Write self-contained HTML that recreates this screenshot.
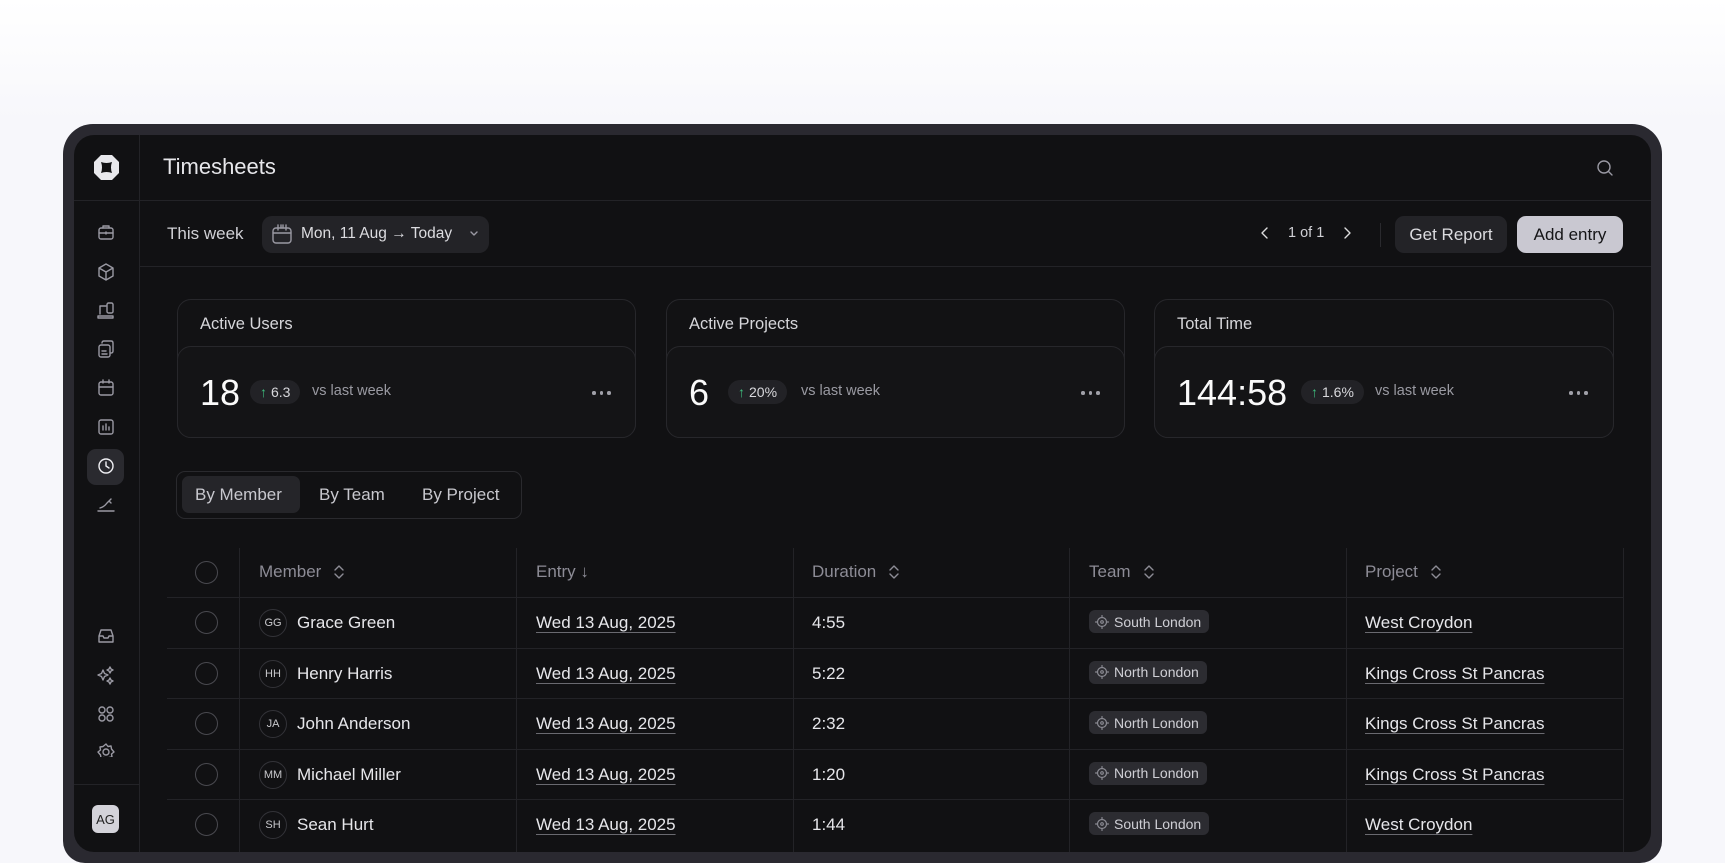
<!DOCTYPE html>
<html><head><meta charset="utf-8"><style>
*{box-sizing:border-box;margin:0;padding:0}
body{width:1725px;height:863px;overflow:hidden;background:linear-gradient(#ffffff 0px,#f7f7fb 120px,#f7f7fb 863px);font-family:"Liberation Sans",sans-serif;position:relative}
.a{position:absolute}
.frame{left:63px;top:124px;width:1599px;height:739px;background:#2a2930;border-radius:30px 30px 22px 22px}
.inner{left:74px;top:135px;width:1577px;height:717px;background:#111113;border-radius:20px;overflow:hidden}
.t{color:#e6e6ea;white-space:nowrap}
.hl{background:#232327;height:1px}
.vl{background:#232327;width:1px}
svg{display:block}
.ic{stroke:#9a99a3;fill:none;stroke-width:1.4;stroke-linecap:round;stroke-linejoin:round}
.card{border:1px solid #27272b;border-radius:14px;background:#121214}
.card .in{position:absolute;left:-1px;right:-1px;bottom:-1px;height:92px;border:1px solid #27272b;border-radius:14px;background:#141416}
.badge{background:#222226;border-radius:12px;height:24px;font-size:14px;color:#d8d8dc;padding:0 10px;display:flex;align-items:center;gap:4px}
.row .t{font-size:17px}
.pill{background:#2c2c31;border-radius:6px;height:23px;font-size:14px;color:#cfcfd5;display:flex;align-items:center;padding:0 8px 0 6px;gap:5px}
.u{text-decoration:underline;text-decoration-color:#6a6a70;text-underline-offset:4px}
.cb{width:23px;height:23px;border:1.5px solid #4a4a50;border-radius:50%}
.av{width:28px;height:28px;border:1px solid #333338;border-radius:50%;font-size:11px;color:#c8c8cc;display:flex;align-items:center;justify-content:center}
.th{color:#8d8c96;font-size:17px;display:flex;align-items:center;gap:12px}
.dots{display:flex;gap:4px}.dots i{width:3.5px;height:3.5px;border-radius:50%;background:#a0a0a8}
</style></head><body>
<div class="a frame"></div>
<div class="a inner">
 <div class="a vl" style="left:65px;top:0;height:717px"></div>
 <div class="a hl" style="left:0;top:65px;width:1577px"></div>
 <div class="a hl" style="left:65px;top:131px;width:1512px"></div>
 <div class="a hl" style="left:0;top:649px;width:65px"></div>
 <svg class="a" style="left:19px;top:19px" width="27" height="27" viewBox="0 0 27 27"><path d="M8 1h11l7 7v11l-7 7H8l-7-7V8z" fill="#e8e8ec"/><path d="M8 8q5.5 2 11 0q-2 5.5 0 11q-5.5-2-11 0q2-5.5 0-11z" fill="#111113"/></svg>
 <div class="a" style="left:13px;top:314px;width:37px;height:36px;background:#2a2a2f;border-radius:9px"></div>
 <svg class="a" style="left:23px;top:88px" width="18" height="420" viewBox="0 0 18 420">
  <g class="ic">
   <rect x="2" y="5" width="14" height="11" rx="2"/><path d="M6 5V3h6v2M2 10h14M9 9v2"/>
   <g transform="translate(0,40)"><path d="M9 1l7 4v8l-7 4-7-4V5z M2 5l7 4 7-4 M9 9v8"/></g>
   <g transform="translate(0,78)"><path d="M3 13V5h6M1 15h15v2H1z"/><rect x="10" y="2" width="6" height="10" rx="1.5"/></g>
   <g transform="translate(0,117)"><rect x="2" y="5" width="11" height="12" rx="2"/><path d="M5 3q0-2 2-2h7q2 0 2 2v8q0 2-2 2M5 11h4M5 14h5"/></g>
   <g transform="translate(0,156)"><rect x="2" y="3" width="14" height="13" rx="2"/><path d="M2 8h14M6 1v3M12 1v3"/></g>
   <g transform="translate(0,195)"><rect x="2" y="2" width="14" height="14" rx="2"/><path d="M6 12V8M9 12V6M12 12V9"/></g>
   <g transform="translate(0,234)" style="stroke:#f0f0f4"><circle cx="9" cy="9" r="7"/><path d="M9 5v4l3 2"/></g>
   <g transform="translate(0,273)"><path d="M1 15h16M3 12q4-1 7-5l4-4 M12 5l2 2"/></g>
  </g>
 </svg>
 <svg class="a" style="left:23px;top:492px" width="18" height="130" viewBox="0 0 18 130"><g class="ic">
  <path d="M2 9l2-6h10l2 6v6H2z M2 9h4l1 2h4l1-2h4"/>
  <g transform="translate(0,39)"><path d="M6 4l1.5 3.5L11 9l-3.5 1.5L6 14l-1.5-3.5L1 9l3.5-1.5z M13 1l1 2 2 1-2 1-1 2-1-2-2-1 2-1z M13 12l1 2 2 1-2 1-1 2-1-2-2-1 2-1z"/></g>
  <g transform="translate(0,78)"><circle cx="5" cy="5" r="3"/><circle cx="13" cy="5" r="3"/><circle cx="5" cy="13" r="3"/><circle cx="13" cy="13" r="3"/></g>
  <g transform="translate(0,116)"><circle cx="9" cy="9" r="3"/><path d="M9 1l2 2.5 3-.5.5 3L17 9l-2.5 2 .5 3-3 .5L9 17l-2-2.5-3 .5-.5-3L1 9l2.5-2-.5-3 3-.5z"/></g>
 </g></svg>
 <div class="a" style="left:18px;top:670px;width:27px;height:28px;background:#d4d3da;border-radius:6px;color:#222;font-size:13px;display:flex;align-items:center;justify-content:center">AG</div>
 <div class="a t" style="left:89px;top:19px;font-size:22px">Timesheets</div>
 <svg class="a" style="left:1522px;top:24px" width="18" height="18" viewBox="0 0 18 18"><g class="ic"><circle cx="8" cy="8" r="6"/><path d="M12.5 12.5L16 16"/></g></svg>
 <div class="a t" style="left:93px;top:89px;font-size:17px;color:#d0d0d5">This week</div>
 <div class="a" style="left:188px;top:81px;width:227px;height:37px;background:#232327;border-radius:10px"></div>
 <svg class="a" style="left:197px;top:89px" width="22" height="21" viewBox="0 0 22 21"><g class="ic"><rect x="2" y="4" width="18" height="15" rx="3"/><path d="M2 9h18M7 1v5M15 1v5M10 1v3M12 1v3"/></g></svg>
 <div class="a t" style="left:227px;top:90px;font-size:15.5px;color:#dcdce0">Mon, 11 Aug → Today</div>
 <svg class="a" style="left:395px;top:95px" width="10" height="8" viewBox="0 0 10 8"><path d="M2 2l3 3 3-3" class="ic"/></svg>
 <svg class="a" style="left:1186px;top:91px" width="10" height="14" viewBox="0 0 10 14"><path d="M7 2L2 7l5 5" class="ic" style="stroke:#ddd"/></svg>
 <div class="a t" style="left:1214px;top:90px;font-size:14.5px;color:#d0d0d5">1 of 1</div>
 <svg class="a" style="left:1268px;top:91px" width="10" height="14" viewBox="0 0 10 14"><path d="M3 2l5 5-5 5" class="ic" style="stroke:#ddd"/></svg>
 <div class="a vl" style="left:1306px;top:88px;height:24px;background:#2a2a2e"></div>
 <div class="a t" style="left:1321px;top:81px;width:112px;height:37px;background:#232327;border-radius:9px;font-size:17px;display:flex;align-items:center;justify-content:center;color:#dcdce0">Get Report</div>
 <div class="a t" style="left:1443px;top:81px;width:106px;height:37px;background:#c9c8d1;border-radius:9px;font-size:17px;display:flex;align-items:center;justify-content:center;color:#151517">Add entry</div>
 <div class="a card" style="left:103px;top:164px;width:459px;height:139px"><div class="a t" style="left:22px;top:15px;font-size:16.5px;color:#d6d6da">Active Users</div><div class="in">
  <div class="a t" style="left:22px;top:25px;font-size:36px;color:#fafafa">18</div>
  <div class="a badge" style="left:72px;top:33px"><span style="color:#3fbf7f">↑</span>6.3</div>
  <div class="a t" style="left:134px;top:36px;font-size:14.5px;color:#9a9aa2">vs last week</div>
  <div class="a dots" style="left:414px;top:44px"><i></i><i></i><i></i></div></div></div>
 <div class="a card" style="left:592px;top:164px;width:459px;height:139px"><div class="a t" style="left:22px;top:15px;font-size:16.5px;color:#d6d6da">Active Projects</div><div class="in">
  <div class="a t" style="left:22px;top:25px;font-size:36px;color:#fafafa">6</div>
  <div class="a badge" style="left:61px;top:33px"><span style="color:#3fbf7f">↑</span>20%</div>
  <div class="a t" style="left:134px;top:36px;font-size:14.5px;color:#9a9aa2">vs last week</div>
  <div class="a dots" style="left:414px;top:44px"><i></i><i></i><i></i></div></div></div>
 <div class="a card" style="left:1080px;top:164px;width:460px;height:139px"><div class="a t" style="left:22px;top:15px;font-size:16.5px;color:#d6d6da">Total Time</div><div class="in">
  <div class="a t" style="left:22px;top:25px;font-size:36px;color:#fafafa">144:58</div>
  <div class="a badge" style="left:146px;top:33px"><span style="color:#3fbf7f">↑</span>1.6%</div>
  <div class="a t" style="left:220px;top:36px;font-size:14.5px;color:#9a9aa2">vs last week</div>
  <div class="a dots" style="left:414px;top:44px"><i></i><i></i><i></i></div></div></div>
 <div class="a" style="left:102px;top:336px;width:346px;height:48px;border:1px solid #2a2a2e;border-radius:9px"></div>
 <div class="a" style="left:108px;top:341px;width:118px;height:37px;background:#252529;border-radius:7px"></div>
 <div class="a t" style="left:121px;top:350px;font-size:17px;color:#c8c8ce">By Member</div>
 <div class="a t" style="left:245px;top:350px;font-size:17px;color:#c8c8ce">By Team</div>
 <div class="a t" style="left:348px;top:350px;font-size:17px;color:#c8c8ce">By Project</div>
 <div class="a vl" style="left:165px;top:413px;height:310px"></div>
 <div class="a vl" style="left:442px;top:413px;height:310px"></div>
 <div class="a vl" style="left:719px;top:413px;height:310px"></div>
 <div class="a vl" style="left:995px;top:413px;height:310px"></div>
 <div class="a vl" style="left:1272px;top:413px;height:310px"></div>
 <div class="a vl" style="left:1549px;top:413px;height:310px"></div>
 <div class="a cb" style="left:121px;top:426px"></div>
 <div class="a th" style="left:185px;top:427px">Member <svg width="12" height="16" viewBox="0 0 12 16"><path class="ic" style="stroke:#8d8c96" d="M2 6l4-4 4 4M2 10l4 4 4-4"/></svg></div>
 <div class="a th" style="left:462px;top:427px">Entry ↓</div>
 <div class="a th" style="left:738px;top:427px">Duration <svg width="12" height="16" viewBox="0 0 12 16"><path class="ic" style="stroke:#8d8c96" d="M2 6l4-4 4 4M2 10l4 4 4-4"/></svg></div>
 <div class="a th" style="left:1015px;top:427px">Team <svg width="12" height="16" viewBox="0 0 12 16"><path class="ic" style="stroke:#8d8c96" d="M2 6l4-4 4 4M2 10l4 4 4-4"/></svg></div>
 <div class="a th" style="left:1291px;top:427px">Project <svg width="12" height="16" viewBox="0 0 12 16"><path class="ic" style="stroke:#8d8c96" d="M2 6l4-4 4 4M2 10l4 4 4-4"/></svg></div>
 <div class="a hl" style="left:93px;top:462px;width:1456px"></div>
 <div id="rows"></div>
</div>
<script>
var d=[["GG","Grace Green","4:55","South London","West Croydon"],["HH","Henry Harris","5:22","North London","Kings Cross St Pancras"],["JA","John Anderson","2:32","North London","Kings Cross St Pancras"],["MM","Michael Miller","1:20","North London","Kings Cross St Pancras"],["SH","Sean Hurt","1:44","South London","West Croydon"]];
var h="";d.forEach(function(r,i){var y=462+i*50.6;
h+='<div class="a row" style="left:0;top:'+y+'px;width:1577px;height:51px">'+(i?'<div class="a hl" style="left:93px;top:0;width:1456px"></div>':'')+
'<div class="a cb" style="left:121px;top:14px"></div><div class="a av" style="left:185px;top:12px">'+r[0]+'</div>'+
'<div class="a t" style="left:223px;top:16px">'+r[1]+'</div><div class="a t u" style="left:462px;top:16px">Wed 13 Aug, 2025</div>'+
'<div class="a t" style="left:738px;top:16px">'+r[2]+'</div><div class="a pill" style="left:1015px;top:13px"><svg width="14" height="14" viewBox="0 0 14 14"><g class="ic" style="stroke:#8a8a92;stroke-width:1.2"><circle cx="7" cy="7" r="4.5"/><circle cx="7" cy="7" r="1.3"/><path d="M7 0.5v2M7 11.5v2M0.5 7h2M11.5 7h2"/></g></svg>'+r[3]+'</div>'+
'<div class="a t u" style="left:1291px;top:16px">'+r[4]+'</div></div>';});
document.getElementById("rows").outerHTML=h;
</script>
</body></html>
